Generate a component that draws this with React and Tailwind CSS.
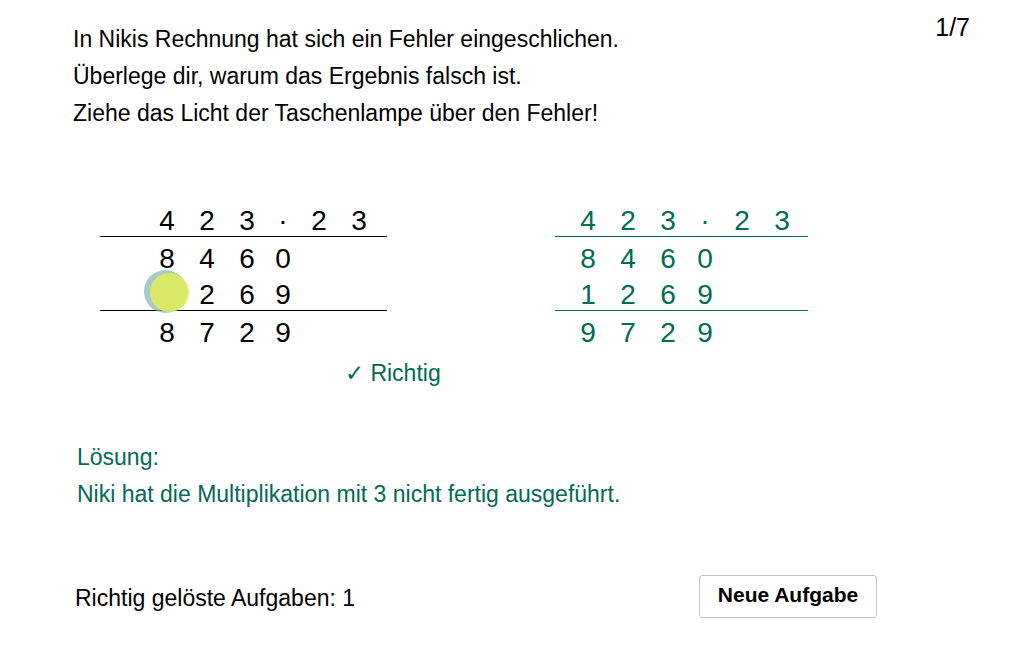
const top = ["4", "2", "3", "·", "2", "3"]

const Calc = ({ rows, result, widths, pad, width, green }) => {
  const color = green ? "text-[#006b56]" : "text-black"
  const line = green ? "border-[#006b56]" : "border-black"
  const Row = ({ cells, className = "" }) => (
    <div className={`flex h-[37px] items-center ${className}`} style={{ paddingLeft: pad }}>
      {cells.map((c, i) => (
        <div key={i} className="text-center pt-[6px]" style={{ width: widths[i] }}>
          {c}
        </div>
      ))}
    </div>
  )
  return (
    <div className={`text-[28px] leading-none pt-[3px] ${color}`} style={{ width }}>
      <Row cells={top} className={`border-b ${line}`} />
      {rows.map((r, i) => (
        <Row key={i} cells={r} className={i === rows.length - 1 ? `border-b ${line}` : ""} />
      ))}
      <Row cells={result} />
    </div>
  )
}

export default function App() {
  return (
    <div
      className="w-[1032px] h-[645px] bg-white text-black overflow-hidden"
      style={{ fontFamily: '"Liberation Sans", Arial, sans-serif' }}
    >
      <div className="pl-[73px] pr-[62px] pt-[21px]">
        <div className="flex justify-between">
          <div className="text-[23px] leading-[37px]">
            <p>In Nikis Rechnung hat sich ein Fehler eingeschlichen.</p>
            <p>Überlege dir, warum das Ergebnis falsch ist.</p>
            <p>Ziehe das Licht der Taschenlampe über den Fehler!</p>
          </div>
          <div className="text-[25px] leading-[37px] -mt-[12px]">1/7</div>
        </div>

        <div className="flex mt-[65px] pl-[27px]">
          <div className="flex flex-col w-[287px] shrink-0">
            <div className="relative">
              <Calc
                rows={[["8", "4", "6", "0"], ["", "2", "6", "9"]]}
                result={["8", "7", "2", "9"]}
                widths={[40, 40, 40, 32, 40, 40]}
                pad={47}
                width={287}
              />
              <div className="absolute left-[44px] top-[73px] w-[43px] h-[43px] rounded-full bg-[#7fb3b3]/70" />
              <div className="absolute left-[50px] top-[76px] w-[39px] h-[39px] rounded-full bg-[#dfeb5c]/90" />
            </div>
            <div className="pl-[245px] mt-[7px] text-[23px] leading-[37px] text-[#006b56] whitespace-nowrap">
              ✓ Richtig
            </div>
          </div>
          <div className="ml-[168px]">
            <Calc
              rows={[["8", "4", "6", "0"], ["1", "2", "6", "9"]]}
              result={["9", "7", "2", "9"]}
              widths={[40, 40, 40, 34, 40, 40]}
              pad={13}
              width={253}
              green
            />
          </div>
        </div>

        <div className="pl-[4px] mt-[47px] text-[23px] leading-[37px] text-[#006b56]">
          <p>Lösung:</p>
          <p>Niki hat die Multiplikation mit 3 nicht fertig ausgeführt.</p>
        </div>

        <div className="flex items-center mt-[66px] pl-[2px] pr-[93px] justify-between">
          <div className="text-[23px] leading-[37px]">Richtig gelöste Aufgaben: 1</div>
          <button className="w-[178px] h-[43px] -mt-[4px] pb-[3px] border border-[#c4c4c4] rounded-[3px] bg-white text-[21px] font-bold">
            Neue Aufgabe
          </button>
        </div>
      </div>
    </div>
  )
}
